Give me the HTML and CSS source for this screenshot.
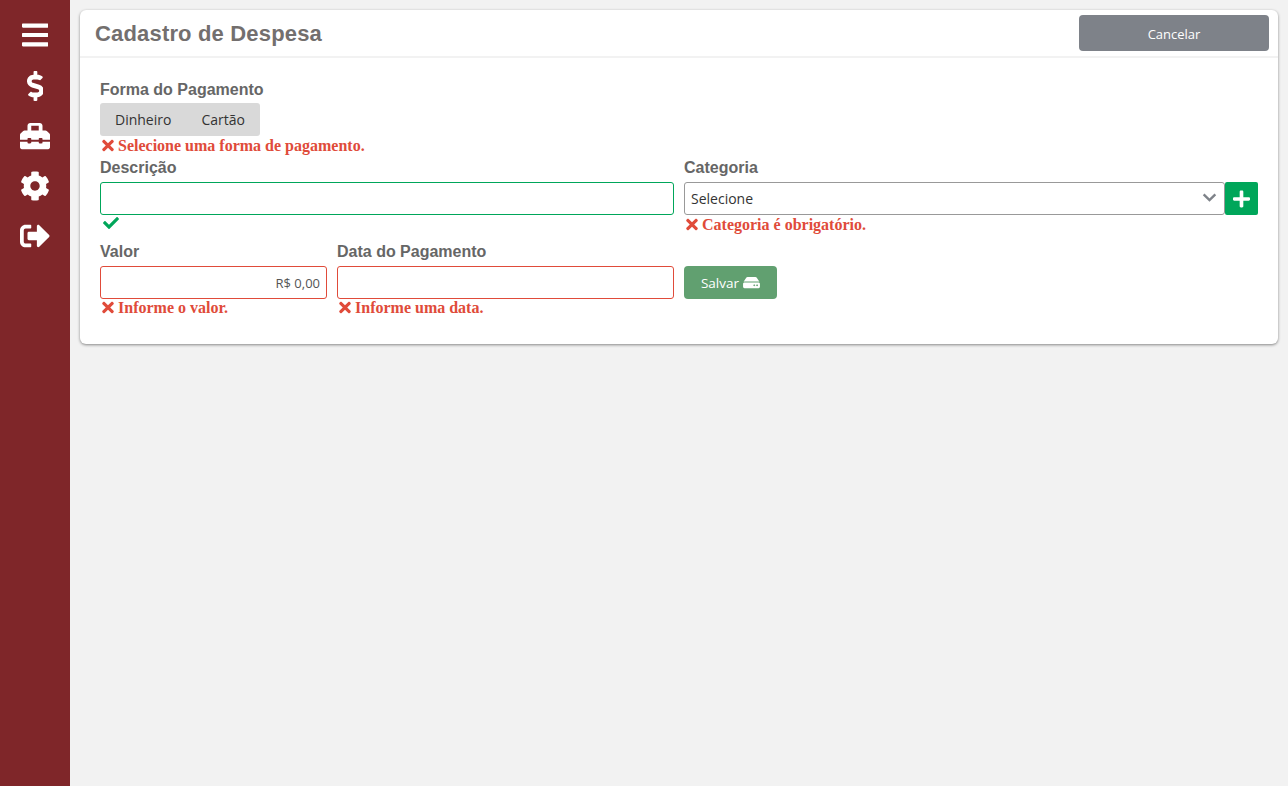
FILE: index.html
```html
<!DOCTYPE html>
<html lang="pt-BR">
<head>
    <meta charset="UTF-8">
    <meta name="viewport" content="width=device-width, initial-scale=1.0">
    <title>Cadastro de Despesa</title>
    <link rel="stylesheet" href="styles.css">
</head>
<body>

<svg class="sprite" width="0" height="0">
    <symbol id="i-times" viewBox="0 0 352 512"><path d="M242.72 256l100.07-100.07c12.28-12.28 12.28-32.19 0-44.48l-22.24-22.24c-12.28-12.28-32.19-12.28-44.48 0L176 189.28 75.93 89.21c-12.28-12.28-32.19-12.28-44.48 0L9.21 111.45c-12.28 12.28-12.28 32.19 0 44.48L109.28 256 9.21 356.07c-12.28 12.28-12.28 32.19 0 44.48l22.24 22.24c12.28 12.28 32.2 12.28 44.48 0L176 322.72l100.07 100.07c12.28 12.28 32.2 12.28 44.48 0l22.24-22.24c12.28-12.28 12.28-32.19 0-44.48L242.72 256z"/></symbol>
</svg>

<nav class="sidebar">
    <svg class="nav-icon" viewBox="0 0 448 512"><path d="M16 132h416c8.837 0 16-7.163 16-16V76c0-8.837-7.163-16-16-16H16C7.163 60 0 67.163 0 76v40c0 8.837 7.163 16 16 16zm0 160h416c8.837 0 16-7.163 16-16v-40c0-8.837-7.163-16-16-16H16c-8.837 0-16 7.163-16 16v40c0 8.837 7.163 16 16 16zm0 160h416c8.837 0 16-7.163 16-16v-40c0-8.837-7.163-16-16-16H16c-8.837 0-16 7.163-16 16v40c0 8.837 7.163 16 16 16z"/></svg>
    <svg class="nav-icon" viewBox="0 0 288 512"><path d="M209.2 233.4l-108-31.6C88.7 198.2 80 186.5 80 173.5c0-16.3 13.2-29.5 29.5-29.5h66.3c12.2 0 24.2 3.7 34.2 10.5 6.1 4.1 14.3 3.1 19.5-2l34.8-34c7.1-6.9 6.1-18.4-1.8-24.5C238 74.8 207.4 64.1 176 64V16c0-8.8-7.2-16-16-16h-32c-8.8 0-16 7.2-16 16v48h-2.5C45.8 64-5.4 118.7.5 183.6c4.2 46.1 39.4 83.6 83.8 96.6l102.5 30c12.5 3.7 21.2 15.3 21.2 28.3 0 16.3-13.2 29.5-29.5 29.5h-66.3C100 368 88 364.3 78 357.5c-6.1-4.1-14.3-3.1-19.5 2l-34.8 34c-7.1 6.9-6.1 18.4 1.8 24.5 24.5 19.2 55.1 29.9 86.5 30v48c0 8.8 7.2 16 16 16h32c8.8 0 16-7.2 16-16v-48.2c46.6-.9 90.3-28.6 105.7-72.7 21.5-61.6-14.6-124.8-72.5-141.7z"/></svg>
    <svg class="nav-icon" viewBox="0 0 512 512"><path d="M502.63 214.63l-45.25-45.25c-6-6-14.14-9.37-22.63-9.37H384V80c0-26.51-21.49-48-48-48H176c-26.51 0-48 21.49-48 48v80H77.25c-8.49 0-16.62 3.37-22.63 9.37L9.37 214.63c-6 6-9.37 14.14-9.37 22.63V320h128v-16c0-8.84 7.16-16 16-16h32c8.84 0 16 7.16 16 16v16h128v-16c0-8.84 7.16-16 16-16h32c8.84 0 16 7.16 16 16v16h128v-82.75c0-8.48-3.37-16.62-9.37-22.62zM320 160H192V80h128v80zm64 208c0 8.84-7.16 16-16 16h-32c-8.84 0-16-7.16-16-16v-16H192v16c0 8.84-7.16 16-16 16h-32c-8.84 0-16-7.16-16-16v-16H0v96c0 17.67 14.33 32 32 32h448c17.67 0 32-14.33 32-32v-96H384v16z"/></svg>
    <svg class="nav-icon" viewBox="0 0 512 512"><path d="M487.4 315.7l-42.6-24.6c4.3-23.2 4.3-47 0-70.2l42.6-24.6c4.9-2.8 7.1-8.6 5.5-14-11.1-35.6-30-67.8-54.7-94.6-3.8-4.1-10-5.1-14.8-2.3L380.8 110c-17.9-15.4-38.5-27.3-60.8-35.1V25.8c0-5.6-3.9-10.5-9.4-11.7-36.7-8.2-74.3-7.8-109.2 0-5.5 1.2-9.4 6.1-9.4 11.7V75c-22.2 7.9-42.8 19.8-60.8 35.1L88.7 85.5c-4.9-2.8-11-1.9-14.8 2.3-24.7 26.7-43.6 58.9-54.7 94.6-1.7 5.4.6 11.2 5.5 14L67.3 221c-4.3 23.2-4.3 47 0 70.2l-42.6 24.6c-4.9 2.8-7.1 8.6-5.5 14 11.1 35.6 30 67.8 54.7 94.6 3.8 4.1 10 5.1 14.8 2.3l42.6-24.6c17.9 15.4 38.5 27.3 60.8 35.1v49.2c0 5.6 3.9 10.5 9.4 11.7 36.7 8.2 74.3 7.8 109.2 0 5.5-1.2 9.4-6.1 9.4-11.7v-49.2c22.2-7.9 42.8-19.8 60.8-35.1l42.6 24.6c4.9 2.8 11 1.9 14.8-2.3 24.7-26.7 43.6-58.9 54.7-94.6 1.5-5.5-.7-11.3-5.6-14.1zM256 336c-44.1 0-80-35.9-80-80s35.9-80 80-80 80 35.9 80 80-35.9 80-80 80z"/></svg>
    <svg class="nav-icon" viewBox="0 0 512 512"><path d="M497 273L329 441c-15 15-41 4.5-41-17v-96H152c-13.3 0-24-10.7-24-24v-96c0-13.3 10.7-24 24-24h136V88c0-21.4 25.9-32 41-17l168 168c9.3 9.4 9.3 24.6 0 34zM192 436v-40c0-6.6-5.4-12-12-12H96c-17.7 0-32-14.3-32-32V160c0-17.7 14.3-32 32-32h84c6.6 0 12-5.4 12-12V76c0-6.6-5.4-12-12-12H96c-53 0-96 43-96 96v192c0 53 43 96 96 96h84c6.6 0 12-5.4 12-12z"/></svg>
</nav>

<main class="content">
    <section class="card">
        <header class="card-header">
            <h1 class="card-title">Cadastro de Despesa</h1>
            <button class="btn-cancel" type="button">Cancelar</button>
        </header>

        <form class="card-body">
            <div class="field">
                <label class="field-label label-first">Forma do Pagamento</label>
                <div class="toggle-group">
                    <button class="toggle-item" type="button">Dinheiro</button>
                    <button class="toggle-item" type="button">Cartão</button>
                </div>
                <div class="error error-low"><svg class="error-icon"><use href="#i-times"/></svg>Selecione uma forma de pagamento.</div>
            </div>

            <div class="row row-second">
                <div class="field half">
                    <label class="field-label">Descrição</label>
                    <input class="input input-ok" type="text">
                    <svg class="check-icon" viewBox="0 0 512 512"><path d="M173.898 439.404l-166.4-166.4c-9.997-9.997-9.997-26.206 0-36.204l36.203-36.204c9.997-9.998 26.207-9.998 36.204 0L192 312.69 432.095 72.596c9.997-9.997 26.207-9.997 36.204 0l36.203 36.204c9.997 9.997 9.997 26.206 0 36.204l-294.4 294.401c-9.998 9.997-26.207 9.997-36.204-.001z"/></svg>
                </div>
                <div class="field half">
                    <label class="field-label">Categoria</label>
                    <div class="select-row">
                        <div class="select-box">
                            <select class="select">
                                <option>Selecione</option>
                            </select>
                            <svg class="chevron" viewBox="0 0 16 10"><path d="M1.5 1.5 8 8l6.500-6.500"/></svg>
                        </div>
                        <button class="btn-add" type="button">
                            <svg class="add-icon" viewBox="0 0 448 512"><path d="M416 208H272V64c0-17.670-14.330-32-32-32h-32c-17.670 0-32 14.330-32 32v144H32c-17.670 0-32 14.330-32 32v32c0 17.670 14.330 32 32 32h144v144c0 17.670 14.330 32 32 32h32c17.670 0 32-14.330 32-32V304h144c17.670 0 32-14.330 32-32v-32c0-17.670-14.330-32-32-32z"/></svg>
                        </button>
                    </div>
                    <div class="error error-low"><svg class="error-icon"><use href="#i-times"/></svg>Categoria é obrigatório.</div>
                </div>
            </div>

            <div class="row">
                <div class="field valor">
                    <label class="field-label">Valor</label>
                    <input class="input input-error input-money" type="text" value="R$ 0,00">
                    <div class="error"><svg class="error-icon"><use href="#i-times"/></svg>Informe o valor.</div>
                </div>
                <div class="field data">
                    <label class="field-label">Data do Pagamento</label>
                    <input class="input input-error" type="text">
                    <div class="error"><svg class="error-icon"><use href="#i-times"/></svg>Informe uma data.</div>
                </div>
                <div class="field half">
                    <span class="field-label">&nbsp;</span>
                    <button class="btn-save" type="submit">Salvar
                        <svg class="save-icon" viewBox="0 0 576 512"><path d="M576 304v96c0 26.510-21.490 48-48 48H48c-26.510 0-48-21.490-48-48v-96c0-26.510 21.490-48 48-48h480c26.510 0 48 21.490 48 48zm-48-80a79.557 79.557 0 0 1 30.777 6.165L462.250 85.374A48.003 48.003 0 0 0 422.311 64H153.689a48 48 0 0 0-39.938 21.374L17.223 230.165A79.557 79.557 0 0 1 48 224h480zm-48 96c-17.673 0-32 14.327-32 32s14.327 32 32 32 32-14.327 32-32-14.327-32-32-32zm-96 0c-17.673 0-32 14.327-32 32s14.327 32 32 32 32-14.327 32-32-14.327-32-32-32z"/></svg>
                    </button>
                </div>
            </div>
        </form>
    </section>
</main>

</body>
</html>
```

FILE: styles.css
```css
* {
    box-sizing: border-box;
}

html,
body {
    height: 100%;
}

body {
    margin: 0;
    display: flex;
    background-color: #f2f2f2;
    font-family: "Open Sans", sans-serif;
    font-size: 14px;
    overflow: hidden;
}

.sprite {
    position: absolute;
}

/* Left menu */
.sidebar {
    width: 70px;
    flex-shrink: 0;
    height: 100%;
    padding-top: 20px;
    display: flex;
    flex-direction: column;
    align-items: center;
    gap: 20px;
    background-color: #7f2629;
}

.nav-icon {
    height: 30px;
    fill: #fff;
}

.nav-icon:first-child {
    margin-bottom: 1px;
}

.content {
    flex: 1;
    padding: 10px 10px 0;
}

.card {
    height: 334px;
    background-color: #fff;
    border-radius: 6px;
    box-shadow: 0 1px 3px rgba(0, 0, 0, 0.45);
}

.card-header {
    height: 48px;
    padding: 5px 9px 0 15px;
    display: flex;
    justify-content: space-between;
    border-bottom: 2px solid #f2f2f2;
}

.card-title {
    margin: 0;
    padding-top: 5px;
    font-family: "Liberation Sans", sans-serif;
    font-size: 22px;
    line-height: 27px;
    font-weight: bold;
    letter-spacing: 0.17px;
    color: #736f6e;
}

.btn-cancel {
    width: 190px;
    height: 36px;
    padding: 2px 0 0;
    border: none;
    border-radius: 4px;
    background-color: #7e8289;
    color: #fff;
    font-family: "Open Sans", sans-serif;
    font-size: 13px;
}

.card-body {
    padding: 21px 20px 0;
}

.row {
    display: flex;
    gap: 10px;
}

.row-second {
    height: 86px;
    padding-top: 2px;
}

.field {
    display: flex;
    flex-direction: column;
    align-items: flex-start;
}

.half {
    width: 574px;
}

.valor {
    width: 227px;
}

.data {
    width: 337px;
}

.field-label {
    height: 25px;
    font-family: "Liberation Sans", sans-serif;
    font-size: 16px;
    line-height: 22px;
    font-weight: bold;
    color: #666;
}

.label-first {
    height: 24px;
}

.toggle-group {
    height: 33px;
    display: flex;
    border-radius: 3px;
    background-color: #d9d9d9;
}

.toggle-item {
    padding: 0 15px;
    border: none;
    background: none;
    color: #333;
    font-family: "Open Sans", sans-serif;
    font-size: 14px;
}

.error {
    height: 18px;
    padding-left: 2px;
    display: flex;
    align-items: center;
    font-family: "Liberation Serif", serif;
    font-size: 16px;
    line-height: 18px;
    font-weight: bold;
    color: #e04b3a;
}

.error-low {
    margin-top: 1px;
}

.error-icon {
    width: 12px;
    height: 17px;
    margin: 0 4px 2px 0;
    fill: #e04b3a;
}

.input {
    width: 100%;
    height: 33px;
    padding: 0 6px;
    border: 1px solid #999;
    border-radius: 3px;
    outline: none;
    background-color: #fff;
    color: #555;
    font-family: "Open Sans", sans-serif;
    font-size: 13px;
}

.input-ok {
    border-color: #00a65a;
}

.input-error {
    border-color: #e04b3a;
}

.input-money {
    text-align: right;
}

.check-icon {
    width: 18px;
    height: 16px;
    margin-left: 2px;
    fill: #00a65a;
}

.select-row {
    width: 100%;
    display: flex;
}

.select-box {
    position: relative;
    flex: 1;
}

.select {
    width: 100%;
    height: 33px;
    padding: 0 6px;
    border: 1px solid #999;
    border-radius: 3px;
    appearance: none;
    background-color: #fff;
    color: #333;
    font-family: "Open Sans", sans-serif;
    font-size: 14px;
}

.chevron {
    position: absolute;
    top: 11px;
    right: 8px;
    width: 15px;
    height: 9px;
    fill: none;
    stroke: #7e8289;
    stroke-width: 2.6;
}

.btn-add {
    width: 33px;
    height: 33px;
    padding: 0;
    display: flex;
    align-items: center;
    justify-content: center;
    border: none;
    border-radius: 2px;
    background-color: #00a65a;
}

.add-icon {
    width: 17px;
    height: 20px;
    fill: #fff;
}

.btn-save {
    width: 93px;
    height: 33px;
    padding: 0;
    display: flex;
    align-items: center;
    justify-content: center;
    gap: 4px;
    border: none;
    border-radius: 4px;
    background-color: #61a070;
    color: #fff;
    font-family: "Open Sans", sans-serif;
    font-size: 13.5px;
}

.save-icon {
    width: 17px;
    height: 15px;
    fill: #fff;
}
```
